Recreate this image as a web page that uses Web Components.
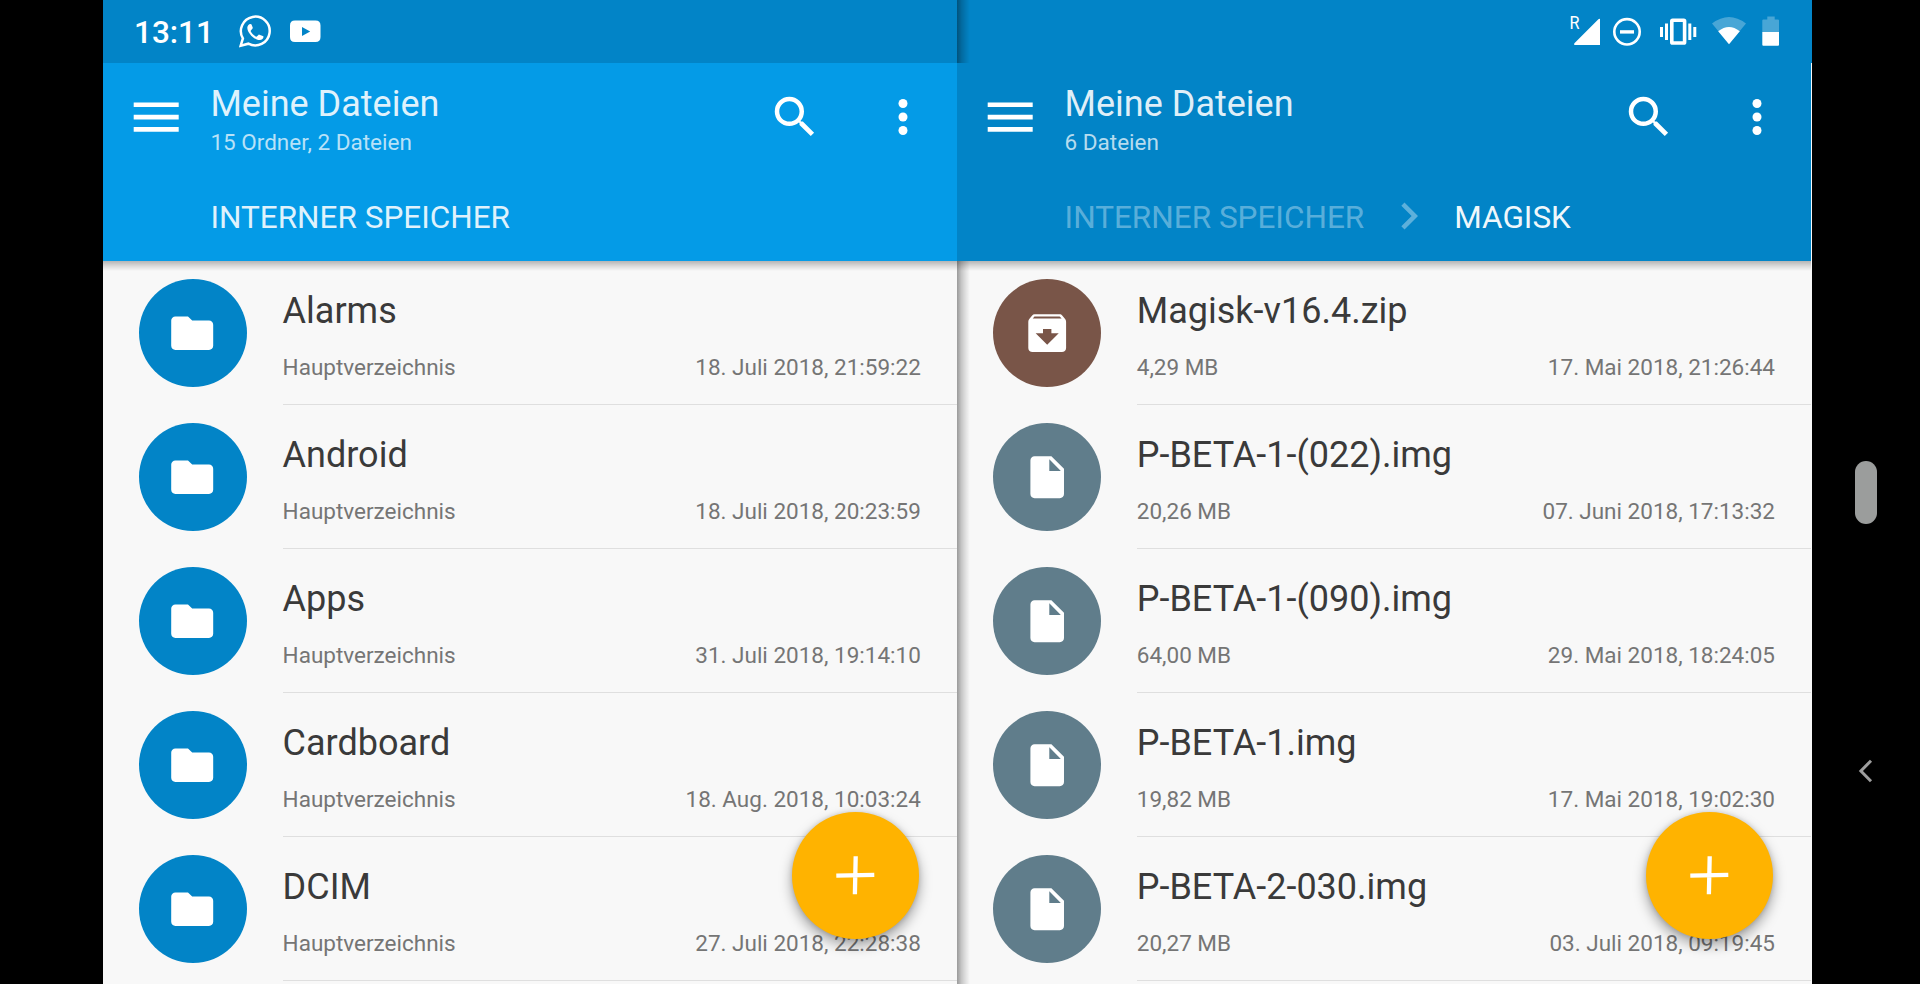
<!DOCTYPE html>
<html lang="de">
<head>
    <meta charset="utf-8">
    <title>Meine Dateien</title>
    <style>
        body {
            margin: 0;
            width: 1920px;
            height: 984px;
            overflow: hidden;
            background: #000;
            font-family: Roboto, "Noto Sans", sans-serif;
        }
    </style>
</head>
<body>
    <device-screen>
        <status-bar slot="status">13:11</status-bar>
        <file-pane>
            <pane-header color="#049be7">
                Meine Dateien
                <span slot="info">15 Ordner, 2 Dateien</span>
                <bread-crumb slot="crumbs">INTERNER SPEICHER</bread-crumb>
            </pane-header>
            <file-row slot="files" type="folder" info="Hauptverzeichnis" date="18. Juli 2018, 21:59:22">Alarms</file-row>
            <file-row slot="files" type="folder" info="Hauptverzeichnis" date="18. Juli 2018, 20:23:59">Android</file-row>
            <file-row slot="files" type="folder" info="Hauptverzeichnis" date="31. Juli 2018, 19:14:10">Apps</file-row>
            <file-row slot="files" type="folder" info="Hauptverzeichnis" date="18. Aug. 2018, 10:03:24">Cardboard</file-row>
            <file-row slot="files" type="folder" info="Hauptverzeichnis" date="27. Juli 2018, 22:28:38">DCIM</file-row>
        </file-pane>
        <file-pane>
            <pane-header color="#0284c7">
                Meine Dateien
                <span slot="info">6 Dateien</span>
                <bread-crumb slot="crumbs" faded>INTERNER SPEICHER</bread-crumb>
                <bread-crumb slot="crumbs" child>MAGISK</bread-crumb>
            </pane-header>
            <file-row slot="files" type="zip" info="4,29 MB" date="17. Mai 2018, 21:26:44">Magisk-v16.4.zip</file-row>
            <file-row slot="files" type="file" info="20,26 MB" date="07. Juni 2018, 17:13:32">P-BETA-1-(022).img</file-row>
            <file-row slot="files" type="file" info="64,00 MB" date="29. Mai 2018, 18:24:05">P-BETA-1-(090).img</file-row>
            <file-row slot="files" type="file" info="19,82 MB" date="17. Mai 2018, 19:02:30">P-BETA-1.img</file-row>
            <file-row slot="files" type="file" info="20,27 MB" date="03. Juli 2018, 09:19:45">P-BETA-2-030.img</file-row>
        </file-pane>
        <nav-strip slot="nav"></nav-strip>
    </device-screen>

    <script>
        (function () {
            const render = (el, html) => {
                el.attachShadow({ mode: "open" }).innerHTML = html;
            };

            class DeviceScreen extends HTMLElement {
                constructor() {
                    super();
                    render(this, `
                    <style>
                        :host {
                            display: grid;
                            grid-template-columns: 1709.4px 108px;
                            padding-left: 102.6px;
                            height: 984px;
                        }
                        .app {
                            position: relative;
                            display: flex;
                            flex-direction: column;
                            height: 984px;
                            background: #f8f8f8;
                        }
                        .panes {
                            display: flex;
                            flex: 1;
                        }
                        /* shadow of the right pane, runs over the status bar too */
                        .edge {
                            position: absolute;
                            left: 854.4px;
                            top: 0;
                            width: 13px;
                            height: 100%;
                            background: linear-gradient(to right, rgba(0, 0, 0, .38), rgba(0, 0, 0, .2) 35%, rgba(0, 0, 0, .1) 65%, transparent);
                        }
                    </style>
                    <div class="app">
                        <slot name="status"></slot>
                        <div class="panes"><slot></slot></div>
                        <div class="edge"></div>
                    </div>
                    <slot name="nav"></slot>
                    `);
                }
            }
            customElements.define("device-screen", DeviceScreen);

            class StatusBar extends HTMLElement {
                constructor() {
                    super();
                    render(this, `
                    <style>
                        :host {
                            display: flex;
                            justify-content: space-between;
                            height: 63px;
                            background: #0284c7;
                            color: #fff;
                        }
                        .left {
                            display: flex;
                            padding-left: 31.4px;
                        }
                        .time {
                            width: 104px;
                            padding-top: 14px;
                            font-size: 31.5px;
                            font-weight: 500;
                            line-height: 37px;
                        }
                        .right {
                            display: flex;
                            padding-right: 32px;
                        }
                        svg {
                            display: block;
                            height: 63px;
                        }
                        text {
                            font: 18px Roboto, sans-serif;
                        }
                    </style>
                    <div class="left">
                        <div class="time"><slot></slot></div>
                        <svg width="84" viewBox="0 0 84 63" fill="#fff">
                            <path d="M2.7 45.7 4.9 38.4A14.4 14.4 0 1 1 10.4 43.7Z" fill="none" stroke="#fff" stroke-width="2.5"/>
                            <path transform="translate(6.6 21.2) scale(.9)" d="M6.6 10.8c1.45 2.83 3.77 5.15 6.6 6.6l2.2-2.2c.27-.27.67-.36 1.02-.25l3.8 1.4c.48.22.78.5.78.95 0 2-1.7 3.7-4.2 3.7C10.5 21 3 13 3 7.4 3 5 4.5 3 6.6 3c.6 0 .9.3 1.1.8l1.3 3.3c.15.4.1.75-.2 1.1z"/>
                            <path fill-rule="evenodd" d="M56 20.4h20.500c3.400 0 5 1.600 5 5v11.500c0 3.400-1.600 5-5 5H56c-3.400 0-5-1.600-5-5V25.400c0-3.400 1.600-5 5-5zM63 26.900v9l8.200-4.500z" transform="translate(1)"/>
                        </svg>
                    </div>
                    <div class="right">
                        <svg width="210" viewBox="1570 0 210 63" fill="#fff">
                            <text x="1569.5" y="29" textLength="10" lengthAdjust="spacingAndGlyphs">R</text>
                            <path d="M1600 20v25h-25q-1.8-.4-.6-1.8l24-24q2-1 1.6.8z"/>
                            <circle cx="1627" cy="31.8" r="12.7" fill="none" stroke="#fff" stroke-width="2.6"/>
                            <path d="M1620 30.2h14v3.4h-14z"/>
                            <rect x="1671.8" y="20.2" width="12.8" height="22.8" rx=".8" fill="none" stroke="#fff" stroke-width="3.6"/>
                            <path d="M1660 27h3v10h-3zM1665 23.5h3v16.5h-3zM1688.3 23.5h3v16.5h-3zM1693.3 27h3v10h-3z"/>
                            <path d="M1729 44l-17-20.5q17-13 34 0z" fill-opacity=".28"/>
                            <path d="M1729 44.3l-10.8-13q10.8-8.6 21.6 0z"/>
                            <path d="M1762.3 32V20.5q0-1 1-1h4v-3h7.4v3h3.3q1 0 1 1V32z" fill-opacity=".28"/>
                            <path d="M1762.3 32h16.7v12.7q0 1-1 1h-14.7q-1 0-1-1z"/>
                        </svg>
                    </div>
                    `);
                }
            }
            customElements.define("status-bar", StatusBar);

            class FilePane extends HTMLElement {
                constructor() {
                    super();
                    render(this, `
                    <style>
                        :host {
                            display: block;
                            position: relative;
                            width: 854.2px;
                            height: 921px;
                            overflow: hidden;
                        }
                        .fab {
                            position: absolute;
                            right: 37.9px;
                            bottom: 45px;
                            width: 126.6px;
                            height: 126.6px;
                            border-radius: 50%;
                            background: #ffb300;
                            box-shadow: 0 6px 13px rgba(0, 0, 0, .36), 0 0 5px rgba(0, 0, 0, .14);
                        }
                        .fab svg {
                            display: block;
                            width: 100%;
                            height: 100%;
                        }
                    </style>
                    <slot></slot>
                    <div class="list"><slot name="files"></slot></div>
                    <div class="fab">
                        <svg viewBox="-63.3 -63.3 126.6 126.6">
                            <path d="M-19 .4 19-.4M.4-19-.4 19" stroke="#fff" stroke-width="4.3"/>
                        </svg>
                    </div>
                    `);
                }
            }
            customElements.define("file-pane", FilePane);

            class PaneHeader extends HTMLElement {
                constructor() {
                    super();
                    render(this, `
                    <style>
                        :host {
                            display: block;
                            position: relative;
                            z-index: 1;
                            height: 198px;
                            background: ${this.getAttribute("color")};
                            color: rgba(255, 255, 255, .88);
                        }
                        :host::after {
                            content: "";
                            position: absolute;
                            left: 0;
                            right: 0;
                            top: 100%;
                            height: 10px;
                            background: linear-gradient(rgba(0, 0, 0, .27), rgba(0, 0, 0, .12) 50%, transparent);
                        }
                        .toolbar {
                            display: flex;
                            align-items: center;
                            height: 108px;
                            padding: 0 27px 0 23.5px;
                        }
                        .titles {
                            flex: 1;
                            padding: 5px 0 0 24.3px;
                        }
                        .title {
                            font-size: 36px;
                            line-height: 42px;
                        }
                        .info {
                            margin-top: 4px;
                            font-size: 22.5px;
                            line-height: 27px;
                            color: rgba(255, 255, 255, .72);
                        }
                        .actions {
                            display: flex;
                            gap: 54px;
                        }
                        svg {
                            display: block;
                            fill: #fff;
                        }
                        .crumbs {
                            display: flex;
                            padding: 28px 0 0 107.8px;
                        }
                    </style>
                    <div class="toolbar">
                        <svg width="60" height="60" viewBox="0 0 60 60"><path d="M7.7 15.4h45V20h-45zM7.7 27.8h45v4.6h-45zM7.7 40.1h45v4.6h-45z"/></svg>
                        <div class="titles">
                            <div class="title"><slot></slot></div>
                            <div class="info"><slot name="info"></slot></div>
                        </div>
                        <div class="actions">
                            <svg width="54" height="54" viewBox="0 0 24 24"><path d="M15.5 14h-.79l-.28-.27A6.471 6.471 0 0 0 16 9.5 6.5 6.5 0 1 0 9.5 16c1.61 0 3.09-.59 4.23-1.57l.27.28v.79l5 4.99L20.49 19l-4.99-5zm-6 0C7.01 14 5 11.99 5 9.5S7.01 5 9.5 5 14 7.01 14 9.5 11.99 14 9.5 14z"/></svg>
                            <svg width="54" height="54" viewBox="0 0 24 24"><circle cx="12" cy="6" r="2"/><circle cx="12" cy="12" r="2"/><circle cx="12" cy="18" r="2"/></svg>
                        </div>
                    </div>
                    <div class="crumbs"><slot name="crumbs"></slot></div>
                    `);
                }
            }
            customElements.define("pane-header", PaneHeader);

            class BreadCrumb extends HTMLElement {
                constructor() {
                    super();
                    const chevron = this.hasAttribute("child")
                        ? `<svg width="54" height="54" viewBox="0 0 24 24"><path d="M10 6L8.59 7.41 13.17 12l-4.58 4.59L10 18l6-6z"/></svg>`
                        : "";
                    render(this, `
                    <style>
                        :host {
                            display: flex;
                            align-items: center;
                            height: 37px;
                            font-size: 31.5px;
                            line-height: 37px;
                            white-space: nowrap;
                        }
                        :host([faded]) {
                            color: rgba(255, 255, 255, .36);
                        }
                        :host([child]) {
                            color: rgba(255, 255, 255, .95);
                        }
                        svg {
                            margin: -11px 18px -8px;
                            fill: rgba(255, 255, 255, .36);
                        }
                    </style>
                    ${chevron}<slot></slot>
                    `);
                }
            }
            customElements.define("bread-crumb", BreadCrumb);

            const TYPES = {
                folder: {
                    color: "#0284c7",
                    path: "M10 4H4c-1.1 0-1.99.9-1.99 2L2 18c0 1.1.9 2 2 2h16c1.1 0 2-.9 2-2V8c0-1.1-.9-2-2-2h-8l-2-2z",
                },
                file: {
                    color: "#607d8b",
                    path: "M6 2c-1.1 0-1.99.9-1.99 2L4 20c0 1.1.89 2 1.99 2H18c1.1 0 2-.9 2-2V8l-6-6H6zm7 7V3.5L18.5 9H13z",
                },
                zip: {
                    color: "#795548",
                    path: "M20.54 5.23l-1.39-1.68C18.88 3.21 18.47 3 18 3H6c-.47 0-.88.21-1.16.55L3.46 5.23C3.17 5.57 3 6.02 3 6.5V19c0 1.1.9 2 2 2h14c1.1 0 2-.9 2-2V6.5c0-.48-.17-.93-.46-1.27zM12 17.5L6.5 12H10v-2h4v2h3.5L12 17.5zM5.12 5l.81-1h12l.94 1H5.12z",
                },
            };

            class FileRow extends HTMLElement {
                constructor() {
                    super();
                    const { color, path } = TYPES[this.getAttribute("type")];
                    render(this, `
                    <style>
                        :host {
                            display: flex;
                            height: 144px;
                            padding-left: 36px;
                        }
                        .avatar {
                            display: flex;
                            align-items: center;
                            justify-content: center;
                            width: 108px;
                            height: 108px;
                            margin: 18px 36px 0 0;
                            border-radius: 50%;
                            background: ${color};
                        }
                        svg {
                            width: 50.4px;
                            height: 50.4px;
                            fill: #fff;
                        }
                        .text {
                            flex: 1;
                            box-sizing: border-box;
                            padding: 29px 36px 0 0;
                            border-bottom: 1px solid #dfdfdf;
                        }
                        .name {
                            font-size: 36px;
                            line-height: 42px;
                            color: #3a3a3a;
                        }
                        .meta {
                            display: flex;
                            justify-content: space-between;
                            margin-top: 22px;
                            font-size: 22.5px;
                            line-height: 27px;
                            color: #757575;
                        }
                    </style>
                    <div class="avatar"><svg viewBox="0 0 24 24"><path d="${path}"/></svg></div>
                    <div class="text">
                        <div class="name"><slot></slot></div>
                        <div class="meta">
                            <span>${this.getAttribute("info")}</span>
                            <span>${this.getAttribute("date")}</span>
                        </div>
                    </div>
                    `);
                }
            }
            customElements.define("file-row", FileRow);

            class NavStrip extends HTMLElement {
                constructor() {
                    super();
                    render(this, `
                    <style>
                        :host {
                            display: flex;
                            flex-direction: column;
                            align-items: center;
                            box-sizing: border-box;
                            height: 984px;
                            padding-top: 460.5px;
                        }
                        .home {
                            width: 22.5px;
                            height: 63px;
                            border-radius: 12px;
                            background: #9b9d9c;
                        }
                        svg {
                            margin-top: 233.5px;
                        }
                    </style>
                    <div class="home"></div>
                    <svg width="28" height="28" viewBox="0 0 28 28"><path d="M19 3.7 8.9 14 19 24.3" fill="none" stroke="#9e9e9e" stroke-width="3"/></svg>
                    `);
                }
            }
            customElements.define("nav-strip", NavStrip);
        })();
    </script>
</body>
</html>
